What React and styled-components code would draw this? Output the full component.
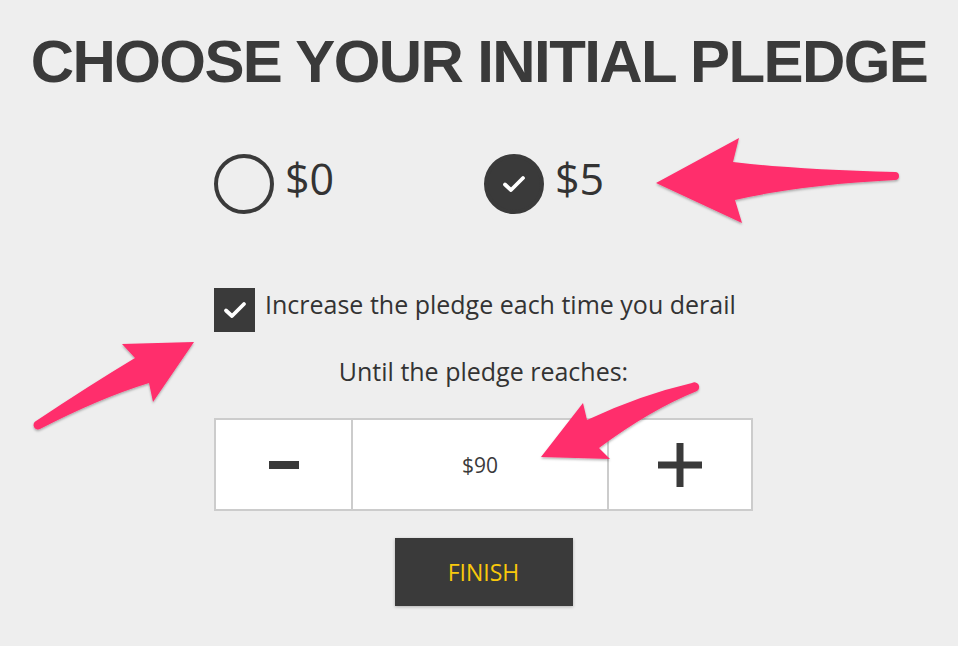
import React, { useState } from 'react';
import styled, { createGlobalStyle } from 'styled-components';

const GlobalStyle = createGlobalStyle`
  html, body {
    margin: 0;
    padding: 0;
    background: #eeeeee;
  }
  body {
    font-family: "Open Sans", Lato, sans-serif;
    color: #333333;
  }
`;

const Page = styled.div`
  position: relative;
  width: 958px;
  height: 646px;
  overflow: hidden;
  background: #eeeeee;
`;

const Title = styled.h1`
  margin: 0;
  padding: 30px 0 0 0;
  text-align: center;
  white-space: nowrap;
  font-family: "Liberation Sans", Arial, sans-serif;
  font-weight: bold;
  font-size: 60px;
  line-height: 64px;
  letter-spacing: -1.6px;
  color: #3a3a3a;
`;

const Content = styled.div`
  display: flex;
  flex-direction: column;
  width: 539px;
  margin-left: 214px;
`;

const RadioRow = styled.div`
  display: flex;
  margin-top: 60px;
`;

const RadioOption = styled.label`
  display: flex;
  align-items: center;
  gap: 11px;
  width: ${p => p.$width}px;
  cursor: pointer;
`;

const Circle = styled.span`
  box-sizing: border-box;
  width: 60px;
  height: 60px;
  border-radius: 50%;
  border: 4px solid #3a3a3a;
  background: ${p => (p.$on ? '#3a3a3a' : 'transparent')};
  display: flex;
  align-items: center;
  justify-content: center;
`;

const Amount = styled.span`
  font-size: 43px;
  line-height: 48px;
  color: #333333;
  margin-top: -10px;
`;

const CheckRow = styled.label`
  display: flex;
  align-items: center;
  gap: 10px;
  margin-top: 74px;
  cursor: pointer;
`;

const Box = styled.span`
  width: 41px;
  height: 44px;
  background: #3a3a3a;
  display: flex;
  align-items: center;
  justify-content: center;
`;

const CheckText = styled.span`
  font-size: 25px;
  line-height: 28px;
  color: #333333;
  margin-top: -12px;
`;

const Until = styled.div`
  margin-top: 25px;
  text-align: center;
  font-size: 25px;
  line-height: 28px;
  color: #333333;
`;

const Stepper = styled.div`
  display: flex;
  margin-top: 33px;
  height: 93px;
  box-sizing: border-box;
  border: 2px solid #cccccc;
  background: #ffffff;
`;

const StepButton = styled.button`
  width: ${p => p.$width}px;
  border: none;
  background: #ffffff;
  padding: 0;
  display: flex;
  align-items: center;
  justify-content: center;
  cursor: pointer;
`;

const StepValue = styled.div`
  flex: 1;
  display: flex;
  align-items: center;
  justify-content: center;
  border-left: 2px solid #cccccc;
  border-right: 2px solid #cccccc;
  font-size: 21px;
  color: #3a3a3a;
`;

const Finish = styled.button`
  align-self: center;
  margin-top: 27px;
  width: 178px;
  height: 68px;
  border: none;
  background: #3a3a3a;
  color: #f9c90b;
  font-family: "Open Sans", sans-serif;
  font-size: 23px;
  box-shadow: 0 1px 3px rgba(0, 0, 0, 0.25);
  cursor: pointer;
`;

const Overlay = styled.svg`
  position: absolute;
  left: 0;
  top: 0;
  pointer-events: none;
`;

const Tick = () => (
  <svg width="24" height="24" viewBox="0 0 24 24">
    <path d="M3 12.5 L9 18 L21 6" fill="none" stroke="#ffffff" strokeWidth="3.8" strokeLinecap="round" strokeLinejoin="round" />
  </svg>
);

const App = () => {
  const [pledge, setPledge] = useState(5);
  const [increase, setIncrease] = useState(true);
  const [cap, setCap] = useState(90);

  return (
    <Page>
      <GlobalStyle />
      <Title>CHOOSE YOUR INITIAL PLEDGE</Title>
      <Content>
        <RadioRow>
          <RadioOption $width={270} onClick={() => setPledge(0)}>
            <Circle $on={pledge === 0}>{pledge === 0 && <Tick />}</Circle>
            <Amount>$0</Amount>
          </RadioOption>
          <RadioOption $width={200} onClick={() => setPledge(5)}>
            <Circle $on={pledge === 5}>{pledge === 5 && <Tick />}</Circle>
            <Amount>$5</Amount>
          </RadioOption>
        </RadioRow>

        <CheckRow onClick={() => setIncrease(!increase)}>
          <Box>{increase && <Tick />}</Box>
          <CheckText>Increase the pledge each time you derail</CheckText>
        </CheckRow>

        <Until>Until the pledge reaches:</Until>

        <Stepper>
          <StepButton $width={135} onClick={() => setCap(cap - 10)}>
            <svg width="30" height="8" viewBox="0 0 30 8">
              <rect x="0" y="0" width="30" height="8" fill="#3a3a3a" />
            </svg>
          </StepButton>
          <StepValue>${cap}</StepValue>
          <StepButton $width={142} onClick={() => setCap(cap + 10)}>
            <svg width="44" height="44" viewBox="0 0 44 44">
              <rect x="0" y="18.5" width="44" height="7" fill="#3a3a3a" />
              <rect x="18.5" y="0" width="7" height="44" fill="#3a3a3a" />
            </svg>
          </StepButton>
        </Stepper>

        <Finish>FINISH</Finish>
      </Content>

      <Overlay width="958" height="646" viewBox="0 0 958 646">
        <defs>
          <filter id="sh" x="-10%" y="-10%" width="120%" height="130%">
            <feDropShadow dx="0" dy="1.5" stdDeviation="1.2" floodColor="#000" floodOpacity="0.3" />
          </filter>
        </defs>
        <g fill="#ff2d6c" filter="url(#sh)">
          <path d="M656,183 L739,138 L733,162 Q800,170 895,172 A4,4 0 0 1 895,180 Q800,185 735,200 L742,223 Z" />
          <path d="M194,342 L122,344 L135,358 Q90,385 36,421 A4,4 0 0 0 40,429 Q100,398 149,383 L153,402 Z" />
          <path d="M541,457 L583,403 L587,420 Q640,395 692,383 A4,4 0 0 1 697,391 Q650,410 599,448 L610,459 Z" />
        </g>
      </Overlay>
    </Page>
  );
};

export default App;
